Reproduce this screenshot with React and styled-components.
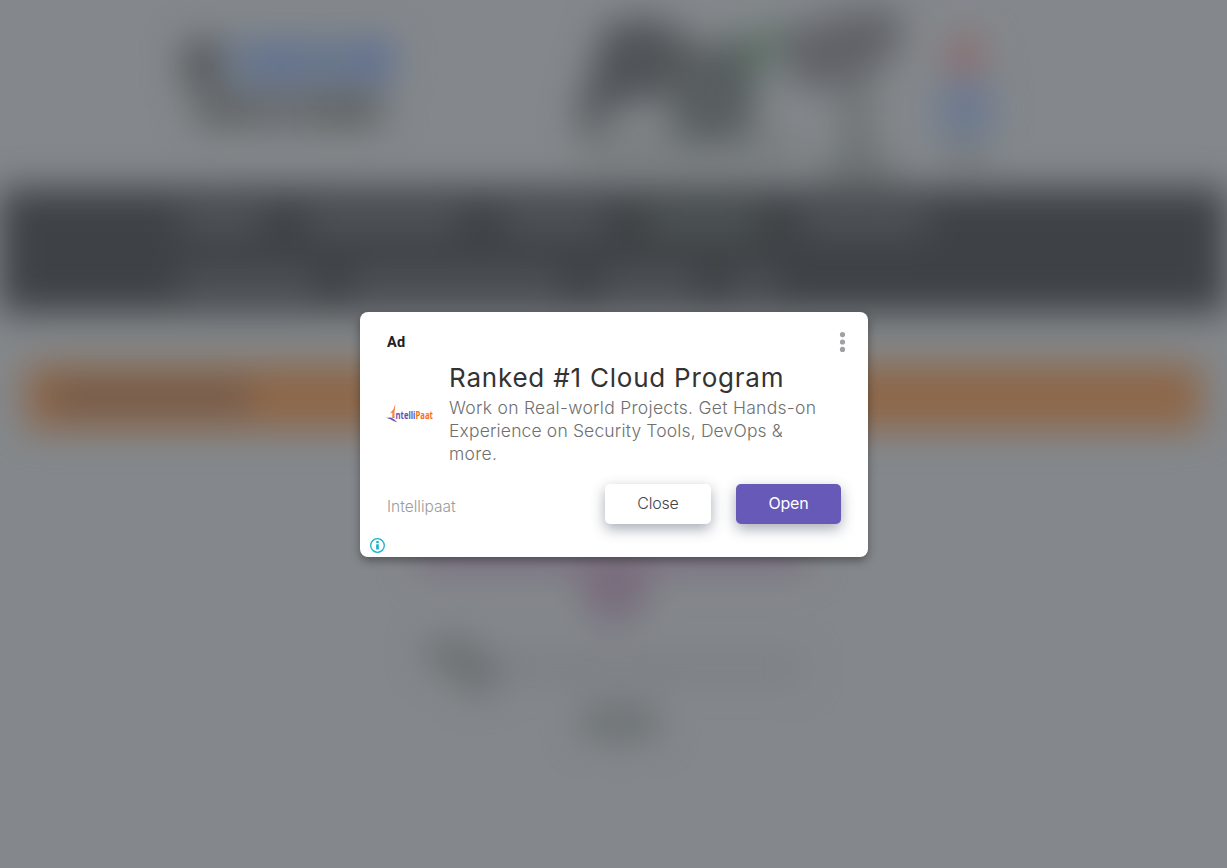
import React from 'react';
import styled, { createGlobalStyle } from 'styled-components';

const GlobalStyle = createGlobalStyle`
  * { box-sizing: border-box; }
  html, body { margin: 0; height: 100%; overflow: hidden; }
  body { background: #84888c; font-family: Inter, Roboto, "Liberation Sans", sans-serif; }
`;

const Screen = styled.div`
  display: grid;
  width: 100vw;
  height: 100vh;
  overflow: hidden;
  background: #84888c;
`;

const Page = styled.div`
  grid-area: 1 / 1;
  display: flex;
  flex-direction: column;
  height: 100vh;
  filter: blur(18px);
`;

const Header = styled.header`
  display: flex;
  height: 188px;
  padding-left: 180px;
`;

const Brand = styled.svg`
  width: 230px;
  height: 188px;
  flex: none;
`;

const Doodle = styled.svg`
  width: 480px;
  height: 188px;
  margin-left: 150px;
  flex: none;
`;

const Nav = styled.nav`
  display: flex;
  flex-direction: column;
  justify-content: space-between;
  height: 125px;
  padding: 22px 180px 18px;
  background: #3e4246;
`;

const NavRow = styled.div`
  display: flex;
  gap: ${(p) => p.$gap}px;
`;

const NavItem = styled.span`
  width: ${(p) => p.$w}px;
  height: 22px;
  background: ${(p) => p.$tone || '#56595d'};
`;

const Banner = styled.div`
  display: flex;
  align-items: center;
  height: 66px;
  margin: 51px 25px 0;
  padding-left: 28px;
  background: #8d6749;
`;

const BannerTitle = styled.span`
  width: 196px;
  height: 24px;
  background: #6b564a;
`;

const Content = styled.svg`
  width: 440px;
  height: 260px;
  margin: 100px auto 0;
  flex: none;
`;

const Overlay = styled.div`
  grid-area: 1 / 1;
  z-index: 1;
  display: flex;
  justify-content: center;
  padding: 312px 0 0 1px;
`;

const Card = styled.section`
  display: flex;
  flex-direction: column;
  width: 508px;
  height: 245px;
  border-radius: 8px;
  background: #fff;
  box-shadow: 0 4px 10px rgba(0, 0, 0, 0.36);
`;

const CardTop = styled.div`
  display: flex;
  align-items: center;
  justify-content: space-between;
  height: 24px;
  margin: 18px 21px 0 27px;
`;

const AdLabel = styled.span`
  padding-top: 1px;
  color: #202124;
  font: 700 14.5px/20px Roboto, sans-serif;
  letter-spacing: 0.3px;
`;

const MenuButton = styled.button`
  display: flex;
  padding: 0;
  border: 0;
  background: none;
`;

const Body = styled.div`
  display: flex;
  height: 118px;
  padding: 8px 0 0 25px;
`;

const Logo = styled.svg`
  width: 50px;
  height: 24px;
  margin: 41px 14px 0 0;
  flex: none;
`;

const Copy = styled.div`
  width: 400px;
`;

const Title = styled.h1`
  margin: 0;
  color: #333;
  font-size: 26px;
  font-weight: 400;
  line-height: 32px;
  letter-spacing: 0.79px;
  white-space: nowrap;
`;

const Description = styled.p`
  margin: 2px 0 0;
  color: #6f6f6f;
  font-size: 17.5px;
  font-weight: 300;
  line-height: 23px;
  letter-spacing: 0.29px;
  white-space: nowrap;
`;

const TightLine = styled.span`
  letter-spacing: 0.15px;
`;

const Actions = styled.div`
  display: flex;
  align-items: center;
  height: 40px;
  margin: 12px 27px 0;
`;

const Advertiser = styled.span`
  flex: 1;
  padding-top: 5px;
  color: #9b9b9b;
  font-size: 15.5px;
  font-weight: 300;
`;

const Button = styled.button`
  width: ${(p) => (p.$primary ? 105 : 106)}px;
  height: 40px;
  margin-left: ${(p) => (p.$primary ? 25 : 0)}px;
  padding: 0 0 2px;
  border: 0;
  border-radius: 5px;
  background: ${(p) => (p.$primary ? '#6759b7' : '#fff')};
  color: ${(p) => (p.$primary ? '#fff' : '#454545')};
  font-family: inherit;
  font-size: 16px;
  font-weight: ${(p) => (p.$primary ? 400 : 300)};
  letter-spacing: -0.2px;
  box-shadow: 0 5px 14px rgba(60, 68, 90, 0.45);
`;

const InfoIcon = styled.svg`
  width: 16px;
  height: 16px;
  margin: 13px 0 0 10px;
`;

const LogoWord = styled.text`
  font: 700 10px "Open Sans", sans-serif;
`;

export default function App() {
  return (
    <Screen>
      <GlobalStyle />
      <Page aria-hidden="true">
        <Header>
          <Brand viewBox="0 0 230 188">
            <rect x="3" y="40" width="38" height="48" fill="#54575a" />
            <path d="M50 39H214V85H50Z" fill="#66758c" />
            <path d="M86 50H116V68H86ZM178 44H210V68H178Z" fill="#5b6c96" />
            <path d="M13 92H205V128H13Z" fill="#66696c" />
            <path d="M30 98H70V120H30ZM142 96H186V124H142Z" fill="#5c5f60" />
          </Brand>
          <Doodle viewBox="0 0 480 188">
            <path d="M45 24 96 18 140 46 130 88 96 99 52 106 32 138 16 120Z" fill="#505458" />
            <path d="M104 62 154 42 200 36 194 130 152 144 114 134Z" fill="#585d5f" />
            <path d="M180 46 222 24 210 57 188 80Z" fill="#506b57" />
            <path d="M216 34 290 10 342 10 338 54 288 86 234 88Z" fill="#606267" />
            <path d="M282 75H310V154H334V180H262V158H282Z" fill="#6b7072" />
            <path d="M20 138H240V160H20Z" fill="#737879" />
            <circle cx="405" cy="55" r="20" fill="#8c6b6c" />
            <path d="M378 80H432V137H378Z" fill="#6c7990" />
            <path d="M386 146H424V162H386Z" fill="#6b7071" />
          </Doodle>
        </Header>
        <Nav>
          <NavRow $gap={42}>
            <NavItem $w={84} />
            <NavItem $w={154} />
            <NavItem $w={104} />
            <NavItem $w={110} $tone="#545a56" />
            <NavItem $w={128} />
          </NavRow>
          <NavRow $gap={36}>
            <NavItem $w={135} />
            <NavItem $w={213} />
            <NavItem $w={97} />
            <NavItem $w={42} />
          </NavRow>
        </Nav>
        <Banner>
          <BannerTitle />
        </Banner>
        <Content viewBox="0 0 440 260">
          <path d="M22 10H414V42H22Z" fill="#7c7081" />
          <circle cx="221" cy="60" r="34" fill="#786c7c" />
          <path d="M28 113 70 108 104 134 98 161 75 166 62 144 33 134Z" fill="#696d70" />
          <path d="M105 126H410V150H105Z" fill="#7b7e84" />
          <path d="M188 177H264V209H188Z" fill="#6a6f72" />
        </Content>
      </Page>
      <Overlay>
        <Card role="dialog" aria-label="Advertisement">
          <CardTop>
            <AdLabel>Ad</AdLabel>
            <MenuButton aria-label="More options">
              <svg width="9" height="20" viewBox="0 0 9 20" fill="#9fa0a4">
                <circle cx="4.5" cy="2.6" r="2.6" />
                <circle cx="4.5" cy="10" r="2.6" />
                <circle cx="4.5" cy="17.4" r="2.6" />
              </svg>
            </MenuButton>
          </CardTop>
          <Body>
            <Logo viewBox="0 0 50 24">
              <path d="M8.6 6 10.2 1 10 6 9.4 9 9.6 15 7.2 15 7.4 9.5 5 10.5Z" fill="#f5853f" />
              <path d="M1 14.8 6 14.6 9 16.2 12.5 19.4 8.4 18 5.4 16.2Z" fill="#6759b7" />
              <LogoWord transform="translate(10.5 15.5) scale(0.77 1)">
                <tspan fill="#6450b4">ntelli</tspan>
                <tspan fill="#fb6d16">Paat</tspan>
              </LogoWord>
            </Logo>
            <Copy>
              <Title>Ranked #1 Cloud Program</Title>
              <Description>
                Work on Real-world Projects. Get Hands-on
                <br />
                <TightLine>Experience on Security Tools, DevOps &amp;</TightLine>
                <br />
                more.
              </Description>
            </Copy>
          </Body>
          <Actions>
            <Advertiser>Intellipaat</Advertiser>
            <Button>Close</Button>
            <Button $primary>Open</Button>
          </Actions>
          <InfoIcon viewBox="0 0 16 16" fill="none" stroke="#12b1ca">
            <circle cx="7.5" cy="8.5" r="6.8" strokeWidth="1.3" />
            <path d="M7.5 7.3v5.2" strokeWidth="2.6" />
            <path d="M7.5 4v2" strokeWidth="2.4" />
          </InfoIcon>
        </Card>
      </Overlay>
    </Screen>
  );
}
